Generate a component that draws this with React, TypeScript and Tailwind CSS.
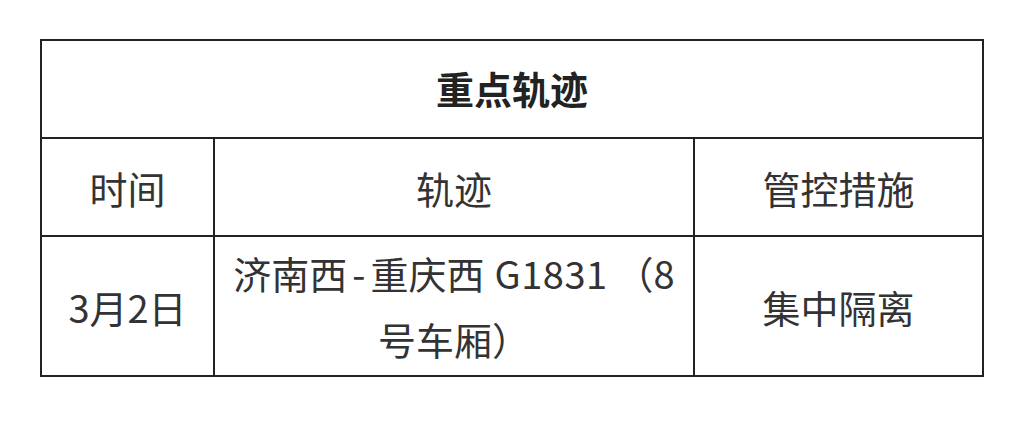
export default function App() {
  return (
    <div className="w-[1024px] h-[421px] bg-white pt-[39px] pl-[40px] font-['Noto_Sans_CJK_SC','Noto_Sans',sans-serif] text-[#333]">
      <table className="w-[942px] table-fixed border-collapse text-[38px] text-center">
        <colgroup>
          <col className="w-[173px]" />
          <col className="w-[480px]" />
          <col className="w-[289px]" />
        </colgroup>
        <tbody>
          <tr className="h-[98px]">
            <td colSpan={3} className="border-2 border-[#222] font-bold text-[#222] pb-1">
              重点轨迹
            </td>
          </tr>
          <tr className="h-[98px]">
            <td className="border-2 border-[#222]">时间</td>
            <td className="border-2 border-[#222]">轨迹</td>
            <td className="border-2 border-[#222]">管控措施</td>
          </tr>
          <tr className="h-[140px]">
            <td className="border-2 border-[#222]">3月2日</td>
            <td className="border-2 border-[#222] leading-[66px] whitespace-nowrap">
              济南西<span className="mx-[5px]">-</span>重庆西
              <span className="ml-[10px] tracking-[0.5px]">G1831</span>
              <span className="ml-[8px]">（</span>8
              <br />
              号车厢）
            </td>
            <td className="border-2 border-[#222]">集中隔离</td>
          </tr>
        </tbody>
      </table>
    </div>
  )
}
